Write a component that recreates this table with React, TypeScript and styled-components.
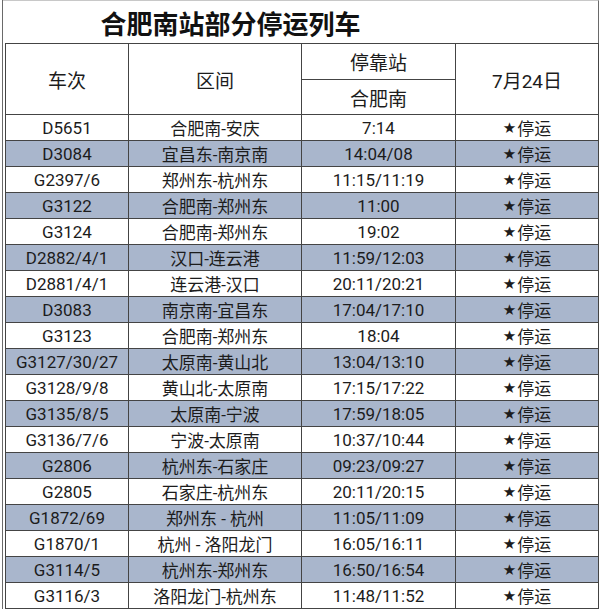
import React from "react";
import styled, { createGlobalStyle } from "styled-components";

const Global = createGlobalStyle`
  html, body { margin: 0; padding: 0; background: #fff; }
  body { font-family: Roboto, "Noto Sans CJK SC", sans-serif; color: #1c1c1c; }
`;

const Page = styled.div`
  width: 600px;
  height: 609px;
  overflow: hidden;
  background: #fff;
`;

const Frame = styled.div`
  margin-left: 2px;
  border-left: 1px solid #6a6a6a;
  height: 609px;
`;

const Title = styled.div`
  box-sizing: border-box;
  width: 596px;
  height: 43px;
  border-top: 1px solid #c8c8c8;
  border-right: 1px solid #6a6a6a;
  display: flex;
  align-items: center;
  justify-content: center;
  padding-right: 140px;
  font-family: "Noto Sans CJK SC", sans-serif;
  font-weight: 700;
  font-size: 26px;
  color: #111;
`;

const Grid = styled.div`
  margin-left: 2px;
  display: grid;
  grid-template-columns: 123px 173px 154px 143px;
  grid-template-rows: 36px 35px repeat(19, 26px);
  border-left: 1px solid #444;
  border-top: 1px solid #444;
  width: max-content;
`;

const Cell = styled.div<{ $shade?: boolean; $rowSpan?: number; $head?: boolean }>`
  box-sizing: border-box;
  border-right: 1px solid #444;
  border-bottom: 1px solid #444;
  display: flex;
  align-items: center;
  justify-content: center;
  white-space: nowrap;
  background: ${(p) => (p.$shade ? "#a9b6cc" : "#fff")};
  font-size: ${(p) => (p.$head ? "19px" : "17px")};
  grid-row: ${(p) => (p.$rowSpan ? `span ${p.$rowSpan}` : "auto")};
  color: #1c1c1c;
  font-family: Roboto, "Noto Sans CJK SC", sans-serif;
`;

const Star = styled.span`
  font-family: "DejaVu Sans", sans-serif;
  font-size: 15px;
  margin-right: 1px;
`;

const rows: [string, string, string][] = [
  ["D5651", "合肥南-安庆", "7:14"],
  ["D3084", "宜昌东-南京南", "14:04/08"],
  ["G2397/6", "郑州东-杭州东", "11:15/11:19"],
  ["G3122", "合肥南-郑州东", "11:00"],
  ["G3124", "合肥南-郑州东", "19:02"],
  ["D2882/4/1", "汉口-连云港", "11:59/12:03"],
  ["D2881/4/1", "连云港-汉口", "20:11/20:21"],
  ["D3083", "南京南-宜昌东", "17:04/17:10"],
  ["G3123", "合肥南-郑州东", "18:04"],
  ["G3127/30/27", "太原南-黄山北", "13:04/13:10"],
  ["G3128/9/8", "黄山北-太原南", "17:15/17:22"],
  ["G3135/8/5", "太原南-宁波", "17:59/18:05"],
  ["G3136/7/6", "宁波-太原南", "10:37/10:44"],
  ["G2806", "杭州东-石家庄", "09:23/09:27"],
  ["G2805", "石家庄-杭州东", "20:11/20:15"],
  ["G1872/69", "郑州东 - 杭州", "11:05/11:09"],
  ["G1870/1", "杭州 - 洛阳龙门", "16:05/16:11"],
  ["G3114/5", "杭州东-郑州东", "16:50/16:54"],
  ["G3116/3", "洛阳龙门-杭州东", "11:48/11:52"],
];

export default function App() {
  return (
    <Page>
      <Global />
      <Frame>
        <Title>合肥南站部分停运列车</Title>
        <Grid>
          <Cell $head $rowSpan={2}>车次</Cell>
          <Cell $head $rowSpan={2}>区间</Cell>
          <Cell $head>停靠站</Cell>
          <Cell $head $rowSpan={2}>7月24日</Cell>
          <Cell $head>合肥南</Cell>
          {rows.map(([train, route, time], i) => {
            const shade = i % 2 === 1;
            return (
              <React.Fragment key={train}>
                <Cell $shade={shade}>{train}</Cell>
                <Cell $shade={shade}>{route}</Cell>
                <Cell $shade={shade}>{time}</Cell>
                <Cell $shade={shade}>
                  <Star>★</Star>停运
                </Cell>
              </React.Fragment>
            );
          })}
        </Grid>
      </Frame>
    </Page>
  );
}
